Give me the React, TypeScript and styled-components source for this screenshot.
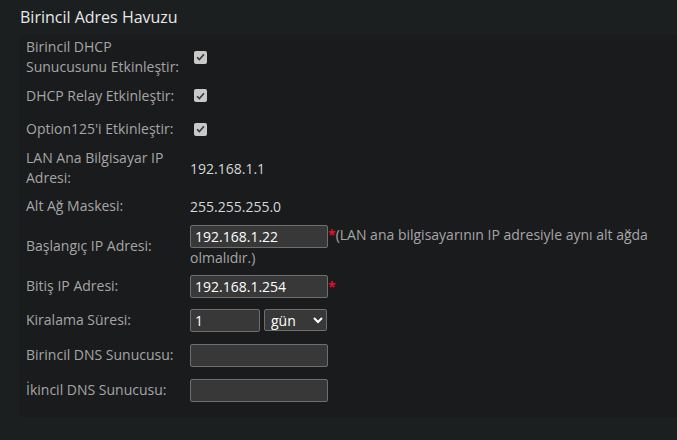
import styled, {createGlobalStyle} from 'styled-components';

const GlobalStyle = createGlobalStyle`
    html, body {
        margin: 0;
        padding: 0;
        background: #1c1f20;
    }
    body {
        font-family: "Open Sans", "Noto Sans", sans-serif;
        font-size: 14px;
    }
`;

interface RowProps {
    $h: number;
}

function CheckBox() {
    return (
        <Check>
            <svg width="9" height="8" viewBox="0 0 9 8">
                <path d="M1 4.2 L3.4 6.6 L8 1.2" fill="none" stroke="#3a3a3a" strokeWidth="1.6" />
            </svg>
        </Check>
    );
}

export default function App() {
    return (
        <>
            <GlobalStyle />
            <Page>
                <Header>Birincil Adres Havuzu</Header>
                <Panel>
                    <Row $h={44}>
                        <Label>Birincil DHCP<br />Sunucusunu Etkinleştir:</Label>
                        <Value><CheckBox /></Value>
                    </Row>
                    <Row $h={33}>
                        <Label>DHCP Relay Etkinleştir:</Label>
                        <Value><CheckBox /></Value>
                    </Row>
                    <Row $h={34}>
                        <Label>Option125'i Etkinleştir:</Label>
                        <Value><CheckBox /></Value>
                    </Row>
                    <Row $h={44}>
                        <Label>LAN Ana Bilgisayar IP<br />Adresi:</Label>
                        <Value><Static>192.168.1.1</Static></Value>
                    </Row>
                    <Row $h={32}>
                        <Label>Alt Ağ Maskesi:</Label>
                        <Value><Static>255.255.255.0</Static></Value>
                    </Row>
                    <Row $h={48}>
                        <Label>Başlangıç IP Adresi:</Label>
                        <Value>
                            <Help>
                                <Input defaultValue="192.168.1.22" />
                                <Req>*</Req>(LAN ana bilgisayarının IP adresiyle aynı alt ağda olmalıdır.)
                            </Help>
                        </Value>
                    </Row>
                    <Row $h={32}>
                        <Label>Bitiş IP Adresi:</Label>
                        <Value>
                            <Input defaultValue="192.168.1.254" />
                            <Req>*</Req>
                        </Value>
                    </Row>
                    <Row $h={36}>
                        <Label>Kiralama Süresi:</Label>
                        <Value>
                            <Input $w={70} defaultValue="1" />
                            <Select defaultValue="gun">
                                <option value="gun">gün</option>
                                <option value="saat">saat</option>
                                <option value="dakika">dakika</option>
                            </Select>
                        </Value>
                    </Row>
                    <Row $h={34}>
                        <Label>Birincil DNS Sunucusu:</Label>
                        <Value><Input defaultValue="" /></Value>
                    </Row>
                    <Row $h={36}>
                        <Label>İkincil DNS Sunucusu:</Label>
                        <Value><Input defaultValue="" /></Value>
                    </Row>
                </Panel>
            </Page>
        </>
    );
}

const Page = styled.div`
    width: 677px;
    height: 440px;
    background: #1c1f20;
    overflow: hidden;
`;

const Header = styled.div`
    height: 35px;
    line-height: 35px;
    padding-left: 20px;
    font-size: 16px;
    color: #e8e8e8;
`;

const Panel = styled.div`
    margin-left: 20px;
    background: #1a1b1d;
    padding-bottom: 9px;
`;

const Row = styled.div<RowProps>`
    display: flex;
    align-items: center;
    height: ${props => props.$h}px;
`;

const Label = styled.div`
    width: 170px;
    padding-left: 6px;
    box-sizing: border-box;
    flex: none;
    line-height: 20px;
    color: #a6a6a6;
`;

const Value = styled.div`
    flex: 1;
    display: flex;
    align-items: center;
    padding-right: 12px;
    color: #a6a6a6;
`;

const Static = styled.span`
    color: #d6d6d6;
`;

const Help = styled.div`
    line-height: 20px;
`;

const Check = styled.span`
    display: inline-flex;
    align-items: center;
    justify-content: center;
    width: 13px;
    height: 13px;
    margin-left: 4px;
    background: #c9c9c9;
    border-radius: 2px;
`;

const Input = styled.input<{$w?: number}>`
    width: ${props => props.$w ?? 138}px;
    height: 23px;
    box-sizing: border-box;
    padding: 0 4px;
    border: 1px solid #6e6e6e;
    border-radius: 2px;
    background: #383838;
    color: #ffffff;
    font-family: inherit;
    font-size: 14px;
    vertical-align: middle;
    outline: none;
`;

const Select = styled.select`
    width: 63px;
    height: 22px;
    margin-left: 4px;
    box-sizing: border-box;
    padding: 0 2px;
    border: 1px solid #6e6e6e;
    border-radius: 2px;
    background: #383838;
    color: #ffffff;
    font-family: inherit;
    font-size: 14px;
    color-scheme: dark;
`;

const Req = styled.span`
    color: #e0102a;
    font-weight: bold;
`;
